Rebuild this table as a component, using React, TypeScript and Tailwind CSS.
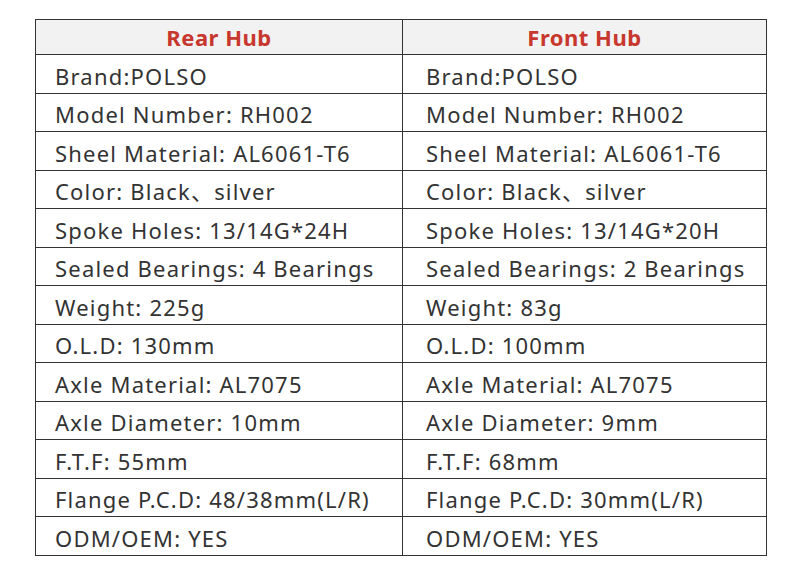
import React from "react";

const rows: [string, string][] = [
  ["Brand:POLSO", "Brand:POLSO"],
  ["Model Number: RH002", "Model Number: RH002"],
  ["Sheel Material: AL6061-T6", "Sheel Material: AL6061-T6"],
  ["Color: Black、silver", "Color: Black、silver"],
  ["Spoke Holes: 13/14G*24H", "Spoke Holes: 13/14G*20H"],
  ["Sealed Bearings: 4 Bearings", "Sealed Bearings: 2 Bearings"],
  ["Weight: 225g", "Weight: 83g"],
  ["O.L.D: 130mm", "O.L.D: 100mm"],
  ["Axle Material: AL7075", "Axle Material: AL7075"],
  ["Axle Diameter: 10mm", "Axle Diameter: 9mm"],
  ["F.T.F: 55mm", "F.T.F: 68mm"],
  ["Flange P.C.D: 48/38mm(L/R)", "Flange P.C.D: 30mm(L/R)"],
  ["ODM/OEM: YES", "ODM/OEM: YES"],
];

export default function App() {
  return (
    <div
      className="w-[800px] h-[585px] bg-white pt-[19px] pl-[35px]"
      style={{ fontFamily: '"Noto Sans", "Open Sans", "Noto Sans CJK SC", sans-serif' }}
    >
      <table className="w-[732px] border-collapse border border-[#333]">
        <thead>
          <tr className="h-[35px] bg-[#f2f2f2]">
            <th className="w-[367px] border border-[#333] text-center text-[22px] font-bold tracking-[0.5px] text-[#c8372d] leading-none">
              Rear Hub
            </th>
            <th className="border border-[#333] text-center text-[22px] font-bold tracking-[0.5px] text-[#c8372d] leading-none">
              Front Hub
            </th>
          </tr>
        </thead>
        <tbody>
          {rows.map(([a, b], i) => (
            <tr key={i} className="h-[38.5px]">
              <td className="border border-[#333] pl-[19px] pt-[4px] text-[22px] tracking-[1.2px] text-[#333] leading-none">
                {a}
              </td>
              <td className="border border-[#333] pl-[23px] pt-[4px] text-[22px] tracking-[1.2px] text-[#333] leading-none">
                {b}
              </td>
            </tr>
          ))}
        </tbody>
      </table>
    </div>
  );
}
